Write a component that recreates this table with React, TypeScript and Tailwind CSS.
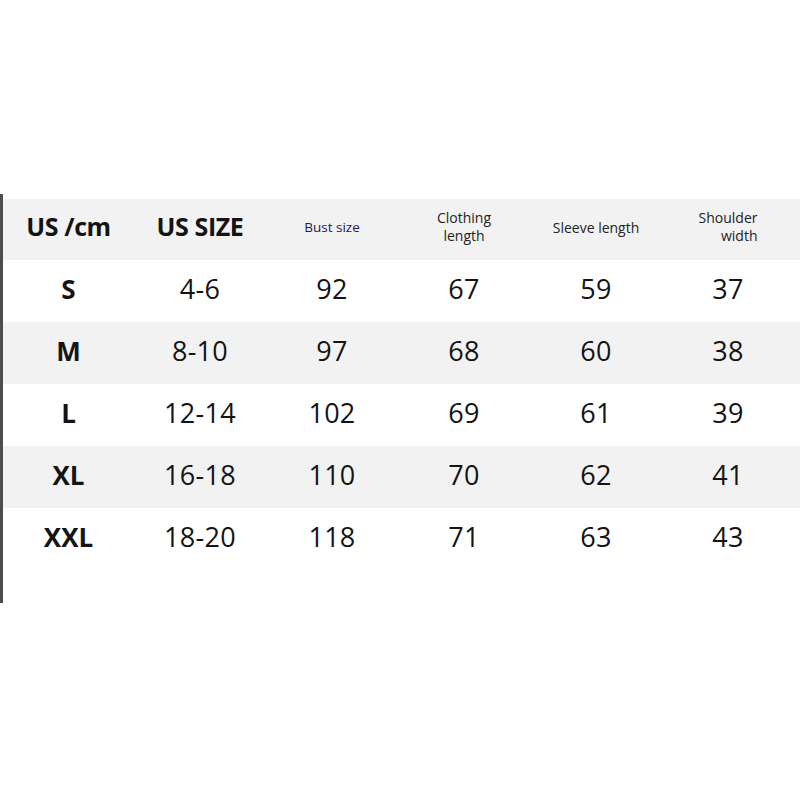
const rows = [
  ["S", "4-6", "92", "67", "59", "37"],
  ["M", "8-10", "97", "68", "60", "38"],
  ["L", "12-14", "102", "69", "61", "39"],
  ["XL", "16-18", "110", "70", "62", "41"],
  ["XXL", "18-20", "118", "71", "63", "43"],
];

export default function App() {
  return (
    <div className="h-[800px] w-[800px] bg-white pt-[194px] font-['Open_Sans','Liberation_Sans',sans-serif] text-[#141414]">
      <div className="h-[409px] border-l-[3px] border-[#4d4d4d] pt-[5px]">
        <div className="grid h-[61px] grid-cols-[131px_132px_132px_132px_132px_132px] items-center bg-[#f2f2f2] pb-[5px]">
          <div className="text-center text-[25px] font-bold tracking-[-0.4px]">US /cm</div>
          <div className="text-center text-[25px] font-bold tracking-[-0.4px]">US SIZE</div>
          <div className="text-center text-[13.5px] text-[#201a5c]">Bust size</div>
          <div className="text-center text-[14px] leading-[18px] text-[#222]">
            Clothing
            <br />
            length
          </div>
          <div className="text-center text-[14px] text-[#222]">Sleeve length</div>
          <div className="flex justify-center">
            <div className="text-right text-[14px] leading-[18px] text-[#222]">
              Shoulder
              <br />
              width
            </div>
          </div>
        </div>
        {rows.map((r, i) => (
          <div
            key={r[0]}
            className={`grid h-[62px] grid-cols-[131px_132px_132px_132px_132px_132px] items-center pb-[4px] ${
              i % 2 === 1 ? "bg-[#f2f2f2]" : "bg-white"
            }`}
          >
            <div className="text-center text-[26px] font-bold">{r[0]}</div>
            {r.slice(1).map((v, j) => (
              <div key={j} className="text-center text-[27px] tracking-[0.3px]">
                {v}
              </div>
            ))}
          </div>
        ))}
      </div>
    </div>
  );
}
